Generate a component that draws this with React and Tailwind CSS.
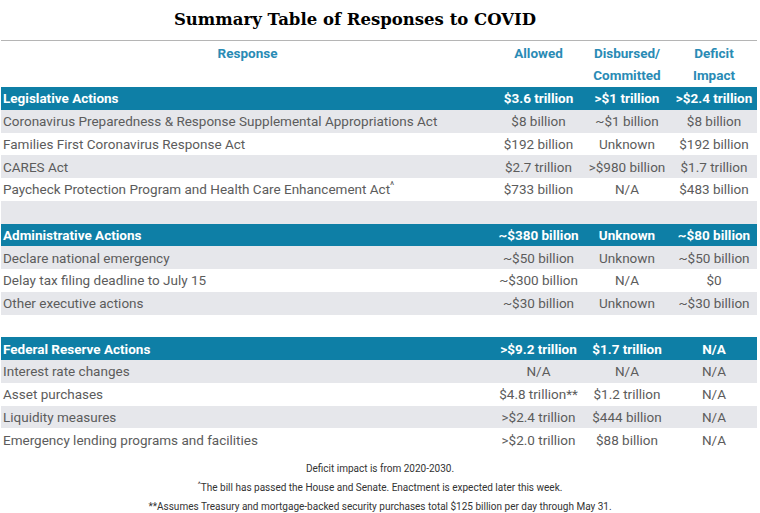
import React from 'react';

const sections = [
  {
    title: 'Legislative Actions',
    totals: ['$3.6 trillion', '>$1 trillion', '>$2.4 trillion'],
    rows: [
      ['Coronavirus Preparedness & Response Supplemental Appropriations Act', '$8 billion', '~$1 billion', '$8 billion'],
      ['Families First Coronavirus Response Act', '$192 billion', 'Unknown', '$192 billion'],
      ['CARES Act', '$2.7 trillion', '>$980 billion', '$1.7 trillion'],
      ['Paycheck Protection Program and Health Care Enhancement Act^', '$733 billion', 'N/A', '$483 billion'],
    ],
  },
  {
    title: 'Administrative Actions',
    totals: ['~$380 billion', 'Unknown', '~$80 billion'],
    rows: [
      ['Declare national emergency', '~$50 billion', 'Unknown', '~$50 billion'],
      ['Delay tax filing deadline to July 15', '~$300 billion', 'N/A', '$0'],
      ['Other executive actions', '~$30 billion', 'Unknown', '~$30 billion'],
    ],
  },
  {
    title: 'Federal Reserve Actions',
    totals: ['>$9.2 trillion', '$1.7 trillion', 'N/A'],
    rows: [
      ['Interest rate changes', 'N/A', 'N/A', 'N/A'],
      ['Asset purchases', '$4.8 trillion**', '$1.2 trillion', 'N/A'],
      ['Liquidity measures', '>$2.4 trillion', '$444 billion', 'N/A'],
      ['Emergency lending programs and facilities', '>$2.0 trillion', '$88 billion', 'N/A'],
    ],
  },
];

const Row = ({ cells, shaded }) => (
  <div className={`flex h-[22.75px] items-center text-[13.5px] text-[#5c5c5c] ${shaded ? 'bg-[#e6e7eb]' : 'bg-white'}`}>
    <div className="w-[493px] pl-[2px] whitespace-nowrap">
      {cells[0].endsWith('^') ? (
        <>
          {cells[0].slice(0, -1)}
          <sup className="text-[10px]">^</sup>
        </>
      ) : (
        cells[0]
      )}
    </div>
    <div className="w-[89px] text-center whitespace-nowrap">{cells[1]}</div>
    <div className="w-[88px] text-center whitespace-nowrap">{cells[2]}</div>
    <div className="w-[86px] text-center whitespace-nowrap">{cells[3]}</div>
  </div>
);

const Bar = ({ title, totals }) => (
  <div className="flex h-[22.75px] items-center bg-[#0e7fa6] text-[13.5px] font-bold text-white">
    <div className="w-[493px] pl-[2px]">{title}</div>
    <div className="w-[89px] text-center whitespace-nowrap">{totals[0]}</div>
    <div className="w-[88px] text-center whitespace-nowrap">{totals[1]}</div>
    <div className="w-[86px] text-center whitespace-nowrap">{totals[2]}</div>
  </div>
);

export default function App() {
  return (
    <div className="w-[760px] h-[513px] bg-white overflow-hidden" style={{ fontFamily: 'Roboto, "Liberation Sans", sans-serif' }}>
      <h1 className="pt-[8px] pr-[50px] h-[40px] text-center text-[16.5px] font-bold text-black" style={{ fontFamily: '"DejaVu Serif", serif' }}>
        Summary Table of Responses to COVID
      </h1>
      <div className="ml-[1px] w-[756px]">
        <div className="h-[1px] bg-[#b5b5b5]" />
        <div className="flex h-[46px] text-[13.5px] font-bold text-[#2a8bb5] leading-[22px] pt-[1px]">
          <div className="w-[493px] text-center">Response</div>
          <div className="w-[89px] text-center">Allowed</div>
          <div className="w-[88px] text-center">Disbursed/<br />Committed</div>
          <div className="w-[86px] text-center">Deficit<br />Impact</div>
        </div>
        {sections.map((s, si) => (
          <div key={s.title}>
            <Bar title={s.title} totals={s.totals} />
            {s.rows.map((r, i) => (
              <Row key={i} cells={r} shaded={i % 2 === 0} />
            ))}
            {si < 2 && <div className={`h-[22.75px] ${s.rows.length % 2 === 0 ? 'bg-[#e6e7eb]' : 'bg-white'}`} />}
          </div>
        ))}
      </div>
      <div className="mt-[8px] text-center text-[10px] leading-[19px] text-[#333]">
        <div>Deficit impact is from 2020-2030.</div>
        <div><sup>^</sup>The bill has passed the House and Senate. Enactment is expected later this week.</div>
        <div>**Assumes Treasury and mortgage-backed security purchases total $125 billion per day through May 31.</div>
      </div>
    </div>
  );
}
